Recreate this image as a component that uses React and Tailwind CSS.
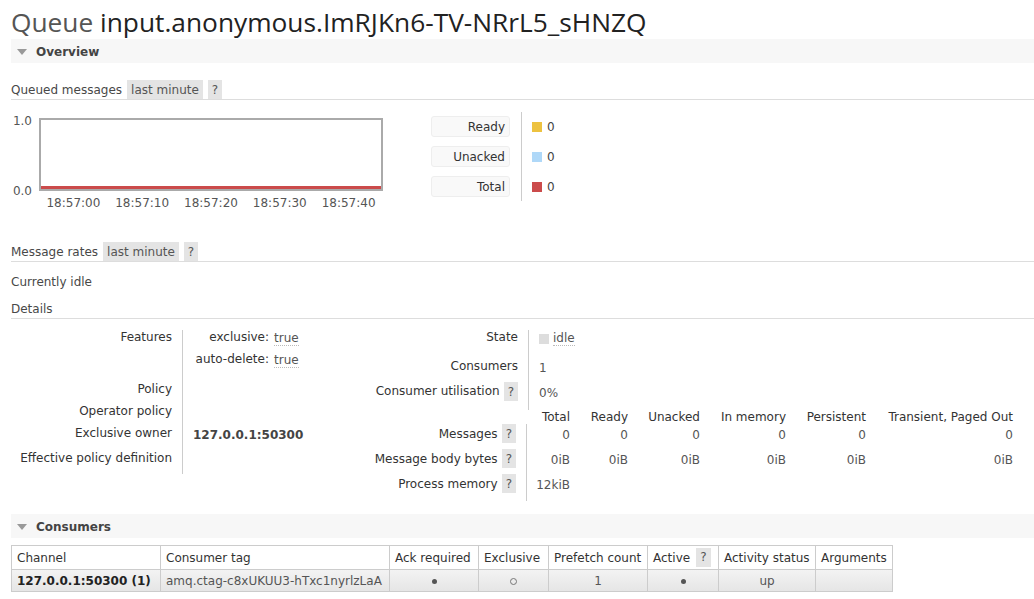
import React from "react";

// small grey "?" help tag
function Help({ className = "" }) {
  return (
    <span className={`inline-flex items-center bg-[#e4e4e4] px-[4px] text-[#555] ${className}`}>?</span>
  );
}

function SectionBar({ title }) {
  return (
    <div className="flex h-[24px] items-center bg-[#f7f7f7]">
      <svg width="10" height="6" viewBox="0 0 10 6" className="ml-[6px] mt-[1px]">
        <path d="M0 0 L10 0 L5 6 Z" fill="#999" />
      </svg>
      <span className="ml-[9px] mt-[1px] font-bold text-[#444]">{title}</span>
    </div>
  );
}

function SubHead({ title, tags }) {
  return (
    <div className="flex h-[20px] border-b border-[#ddd] leading-[19px]">
      <span className="pt-[1px] text-[#484848]">{title}</span>
      {tags && (
        <>
          <span className="ml-[5px] h-[19px] bg-[#e4e4e4] px-[4px] pt-[1px] text-[#555]">last minute</span>
          <span className="ml-[5px] h-[19px] bg-[#e4e4e4] px-[4px] pt-[1px] text-[#555]">?</span>
        </>
      )}
    </div>
  );
}

const Dot = () => <span className="inline-block h-[5px] w-[5px] rounded-full bg-[#555] align-middle" />;
const Ring = () => <span className="inline-block h-[7px] w-[7px] rounded-full border border-[#777] align-middle" />;

const legend = [
  { label: "Ready", color: "bg-[#edc240]" },
  { label: "Unacked", color: "bg-[#afd8f8]" },
  { label: "Total", color: "bg-[#cb4b4b]" },
];

const times = ["18:57:00", "18:57:10", "18:57:20", "18:57:30", "18:57:40"];

const msgCols = [
  { h: "Total", w: "w-[44px]", v: ["0", "0iB"] },
  { h: "Ready", w: "w-[58px]", v: ["0", "0iB"] },
  { h: "Unacked", w: "w-[72px]", v: ["0", "0iB"] },
  { h: "In memory", w: "w-[86px]", v: ["0", "0iB"] },
  { h: "Persistent", w: "w-[80px]", v: ["0", "0iB"] },
  { h: "Transient, Paged Out", w: "w-[147px]", v: ["0", "0iB"] },
];

const consumerCols = [
  { h: "Channel", w: "w-[149px]" },
  { h: "Consumer tag", w: "w-[229px]" },
  { h: "Ack required", w: "w-[89px]" },
  { h: "Exclusive", w: "w-[70px]" },
  { h: "Prefetch count", w: "w-[99px]" },
  { h: "Active", w: "w-[71px]", help: true },
  { h: "Activity status", w: "w-[97px]" },
  { h: "Arguments", w: "w-[77px]" },
];

export default function App() {
  return (
    <div className="min-h-[599px] bg-white pl-[11px] font-['DejaVu_Sans',sans-serif] text-[12px] text-[#484848]">
      {/* titre */}
      <h1 className="h-[39px] pt-[6px] font-['Open_Sans',sans-serif] text-[26.3px] leading-[33px] font-normal text-[#555]">
        Queue <span className="text-[#222]">input.anonymous.ImRJKn6-TV-NRrL5_sHNZQ</span>
      </h1>

      <SectionBar title="Overview" />

      <div className="mt-[17px]">
        <SubHead title="Queued messages" tags />
      </div>

      {/* chart + legend */}
      <div className="mt-[18px] flex items-start">
        <div className="-mt-[4px] flex h-[84px] w-[28px] flex-col justify-between pr-[7px] text-right leading-[14px] text-[#555]">
          <span>1.0</span>
          <span>0.0</span>
        </div>
        <div>
          <div className="flex h-[73px] w-[344px] flex-col justify-end border-2 border-[#aaa]">
            <div className="h-[3px] bg-[#cb4b4b]" />
          </div>
          <div className="mt-[5px] grid w-[344px] grid-cols-5 text-center leading-[14px] text-[#555]">
            {times.map((t) => (
              <span key={t}>{t}</span>
            ))}
          </div>
        </div>
        <div className="-mt-[6px] ml-[48px] flex">
          <div className="flex flex-col gap-[9px] py-[4px]">
            {legend.map((l) => (
              <div
                key={l.label}
                className="h-[21px] w-[79px] rounded-[3px] border border-[#eee] bg-[#f9f9f9] pr-[4px] pt-[1px] text-right leading-[19px] text-[#333]"
              >
                {l.label}
              </div>
            ))}
          </div>
          <div className="ml-[11px] flex flex-col gap-[9px] border-l border-[#ccc] py-[4px] pl-[10px]">
            {legend.map((l) => (
              <div key={l.label} className="flex h-[21px] items-center">
                <span className={`h-[10px] w-[10px] ${l.color}`} />
                <span className="ml-[5px] text-[#444]">0</span>
              </div>
            ))}
          </div>
        </div>
      </div>

      <div className="mt-[32px]">
        <SubHead title="Message rates" tags />
      </div>

      <p className="mt-[13px] leading-[14px]">Currently idle</p>

      <div className="mt-[10px]">
        <SubHead title="Details" />
      </div>

      {/* details */}
      <div className="mt-[11px] flex leading-[14px]">
        <div className="w-[329px]">
          <div className="flex h-[52px]">
            <div className="w-[171px] pr-[10px] text-right text-[#333]">Features</div>
            <div className="flex-1 border-l border-[#ccc] pl-[10px]">
              <div className="flex h-[22px]">
                <span className="w-[76px] text-right text-[#333]">exclusive:</span>
                <span className="ml-[5px] mt-[2px] h-[14px] border-b border-dotted border-[#bbb] leading-[13px] text-[#555]">true</span>
              </div>
              <div className="flex h-[22px]">
                <span className="w-[76px] text-right text-[#333]">auto-delete:</span>
                <span className="ml-[5px] mt-[2px] h-[14px] border-b border-dotted border-[#bbb] leading-[13px] text-[#555]">true</span>
              </div>
            </div>
          </div>
          <div className="flex h-[22px]">
            <div className="w-[171px] pr-[10px] text-right text-[#333]">Policy</div>
            <div className="flex-1 border-l border-[#ccc]" />
          </div>
          <div className="flex h-[22px]">
            <div className="w-[171px] pr-[10px] text-right text-[#333]">Operator policy</div>
            <div className="flex-1 border-l border-[#ccc]" />
          </div>
          <div className="flex h-[25px]">
            <div className="w-[171px] pr-[10px] text-right text-[#333]">Exclusive owner</div>
            <div className="flex-1 border-l border-[#ccc] pl-[10px] pt-[2px] font-bold text-[#444]">127.0.0.1:50300</div>
          </div>
          <div className="flex h-[23px]">
            <div className="w-[171px] pr-[10px] text-right text-[#333]">Effective policy definition</div>
            <div className="flex-1 border-l border-[#ccc]" />
          </div>
        </div>

        <div>
          <div className="flex h-[29px]">
            <div className="w-[188px] pr-[10px] text-right text-[#333]">State</div>
            <div className="flex items-start border-l border-[#ccc] pl-[10px] pt-[4px]">
              <span className="h-[10px] w-[10px] bg-[#ddd]" />
              <span className="-mt-[3px] ml-[4px] h-[15px] border-b border-dotted border-[#bbb] text-[#555]">idle</span>
            </div>
          </div>
          <div className="flex h-[25px]">
            <div className="w-[188px] pr-[10px] text-right text-[#333]">Consumers</div>
            <div className="border-l border-[#ccc] pl-[10px] pt-[2px] text-[#555]">1</div>
          </div>
          <div className="flex h-[26px]">
            <div className="flex w-[188px] items-start justify-end pr-[10px] text-[#333]">
              <span>Consumer utilisation</span>
              <Help className="-mt-[2px] ml-[4px] h-[19px]" />
            </div>
            <div className="border-l border-[#ccc] pl-[10px] pt-[2px] text-[#555]">0%</div>
          </div>

          {/* messages table */}
          <div className="flex h-[14px]">
            <div className="w-[186px]" />
            {msgCols.map((c) => (
              <div key={c.h} className={`${c.w} text-right whitespace-nowrap text-[#333]`}>
                {c.h}
              </div>
            ))}
          </div>
          {[
            { label: "Messages", i: 0 },
            { label: "Message body bytes", i: 1 },
          ].map((r) => (
            <div key={r.label} className="flex h-[25px]">
              <div className="flex w-[186px] items-start justify-end pr-[10px] text-[#333]">
                <span className="pt-[3px]">{r.label}</span>
                <Help className="ml-[4px] h-[19px]" />
              </div>
              {msgCols.map((c, ci) => (
                <div
                  key={c.h}
                  className={`${c.w} pt-[4px] text-right text-[#555] ${ci === 0 ? "border-l border-[#ccc]" : ""}`}
                >
                  {c.v[r.i]}
                </div>
              ))}
            </div>
          ))}
          <div className="flex h-[27px]">
            <div className="flex w-[186px] items-start justify-end pr-[10px] text-[#333]">
              <span className="pt-[3px]">Process memory</span>
              <Help className="ml-[4px] h-[19px]" />
            </div>
            <div className="w-[44px] border-l border-[#ccc] pt-[4px] text-right text-[#555]">12kiB</div>
          </div>
        </div>
      </div>

      <div className="mt-[13px]">
        <SectionBar title="Consumers" />
      </div>

      {/* consumers table */}
      <table className="mt-[7px] border-collapse leading-[14px]">
        <thead>
          <tr className="h-[24px]">
            {consumerCols.map((c) => (
              <th
                key={c.h}
                className={`${c.w} border border-[#ccc] px-[5px] text-left font-normal whitespace-nowrap text-[#333]`}
              >
                {c.help ? (
                  <span className="flex items-center">
                    Active
                    <span className="ml-[6px] bg-[#e4e4e4] px-[4px] leading-[19px] text-[#555]">?</span>
                  </span>
                ) : (
                  c.h
                )}
              </th>
            ))}
          </tr>
        </thead>
        <tbody>
          <tr className="h-[22px] bg-linear-to-b from-[#f3f3f3] to-[#e5e5e5]">
            <td className="border border-[#ccc] px-[5px] font-bold whitespace-nowrap text-[#222]">127.0.0.1:50300 (1)</td>
            <td className="border border-[#ccc] px-[5px] whitespace-nowrap text-[#555]">amq.ctag-c8xUKUU3-hTxc1nyrlzLaA</td>
            <td className="border border-[#ccc] text-center"><Dot /></td>
            <td className="border border-[#ccc] text-center"><Ring /></td>
            <td className="border border-[#ccc] text-center text-[#555]">1</td>
            <td className="border border-[#ccc] text-center"><Dot /></td>
            <td className="border border-[#ccc] text-center text-[#555]">up</td>
            <td className="border border-[#ccc]" />
          </tr>
        </tbody>
      </table>
    </div>
  );
}
